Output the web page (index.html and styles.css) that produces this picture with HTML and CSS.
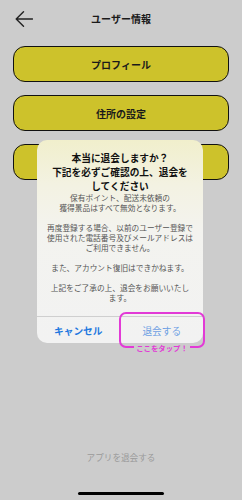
FILE: index.html
```html
<!DOCTYPE html>
<html lang="ja">
<head>
<meta charset="utf-8">
<link rel="stylesheet" href="styles.css">
</head>
<body>
<div class="screen">
  <header class="header">
    <svg class="back" width="18" height="16" viewBox="0 0 18 16"><path d="M8.5 0.8 L1.2 8 L8.5 15.2 M1.2 8 H17.5" fill="none" stroke="#222" stroke-width="1.4" stroke-linecap="round" stroke-linejoin="round"/></svg>
    <div class="title">ユーザー情報</div>
  </header>
  <div class="menu">
    <div class="menu-btn">プロフィール</div>
    <div class="menu-btn">住所の設定</div>
    <div class="menu-btn"></div>
  </div>
  <div class="spacer"></div>
  <div class="leave">アプリを退会する</div>
  <div class="home-bar"></div>

  <div class="alert">
    <div class="alert-body">
      <div class="alert-title">本当に退会しますか？<br>下記を必ずご確認の上、退会を<br>してください</div>
      <div class="alert-msg">保有ポイント、配送未依頼の<br>獲得景品はすべて無効となります。<br><br>再度登録する場合、以前のユーザー登録で<br>使用された電話番号及びメールアドレスは<br>ご利用できません。<br><br>また、アカウント復旧はできかねます。<br><br>上記をご了承の上、退会をお願いいたし<br>ます。</div>
    </div>
    <div class="alert-actions">
      <div class="act cancel">キャンセル</div>
      <div class="act ok">退会する</div>
    </div>
  </div>
  <div class="tap-box"><span class="tap-label">ここをタップ！</span></div>
</div>
</body>
</html>
```
FILE: styles.css
```css
* { box-sizing: border-box; }
html, body { margin: 0; padding: 0; }
body {
  background: #cccccc;
  font-family: "Noto Sans CJK JP", "Noto Sans", sans-serif;
}
.screen {
  position: relative;
  width: 242px;
  height: 500px;
  display: flex;
  flex-direction: column;
  background: #cccccc;
}
.header {
  position: relative;
  height: 38px;
  display: flex;
  align-items: center;
  justify-content: center;
}
.back {
  position: absolute;
  left: 15px;
  top: 11px;
}
.title {
  font-size: 10px;
  font-weight: 700;
  color: #1a1a1a;
  margin-top: -1px;
}
.menu {
  margin: 8px 13px 0;
  display: flex;
  flex-direction: column;
  gap: 13px;
}
.menu-btn {
  height: 36px;
  border: 1.5px solid #111;
  border-radius: 12px;
  background: #cdc22b;
  display: flex;
  align-items: center;
  justify-content: center;
  font-size: 10px;
  font-weight: 700;
  color: #1a1a1a;
}
.spacer { flex: 1; }
.leave {
  text-align: center;
  font-size: 8.6px;
  line-height: 12px;
  color: #9a9a9a;
  margin-bottom: 29px;
}
.home-bar {
  align-self: center;
  width: 86px;
  height: 3.5px;
  border-radius: 2px;
  background: #000;
  margin-bottom: 5px;
}
.alert {
  position: absolute;
  left: 37px;
  top: 140px;
  width: 166px;
  height: 203px;
  border-radius: 10px;
  overflow: hidden;
  background: linear-gradient(180deg, #f1efcc 0%, #f3f2e2 22%, #f3f3ef 45%, #f2f2f2 100%);
  display: flex;
  flex-direction: column;
}
.alert-body {
  padding: 11px 6px 0;
  height: 176px;
  text-align: center;
}
.alert-title {
  font-size: 9.7px;
  font-weight: 700;
  line-height: 14px;
  color: #111;
}
.alert-msg {
  margin-top: 0;
  font-size: 7.7px;
  line-height: 10px;
  color: #555;
  white-space: nowrap;
}
.alert-actions {
  height: 27px;
  border-top: 0.7px solid #cfcfcf;
  display: flex;
}
.act {
  flex: 1;
  display: flex;
  align-items: center;
  justify-content: center;
  font-size: 9.7px;
  padding-top: 1px;
}
.cancel {
  color: #1e78df;
  font-weight: 700;
  border-right: 0.7px solid #d6d6d6;
}
.ok {
  color: #6e9fe3;
}
.tap-box {
  position: absolute;
  left: 119px;
  top: 312px;
  width: 86px;
  height: 36px;
  border: 2px solid #e23ad6;
  border-radius: 7px;
  display: flex;
  justify-content: center;
}
.tap-label {
  position: absolute;
  bottom: -6px;
  background: #cccccc;
  padding: 0 2px;
  font-size: 7.4px;
  line-height: 9px;
  font-weight: 700;
  color: #e23ad6;
  white-space: nowrap;
}
```
